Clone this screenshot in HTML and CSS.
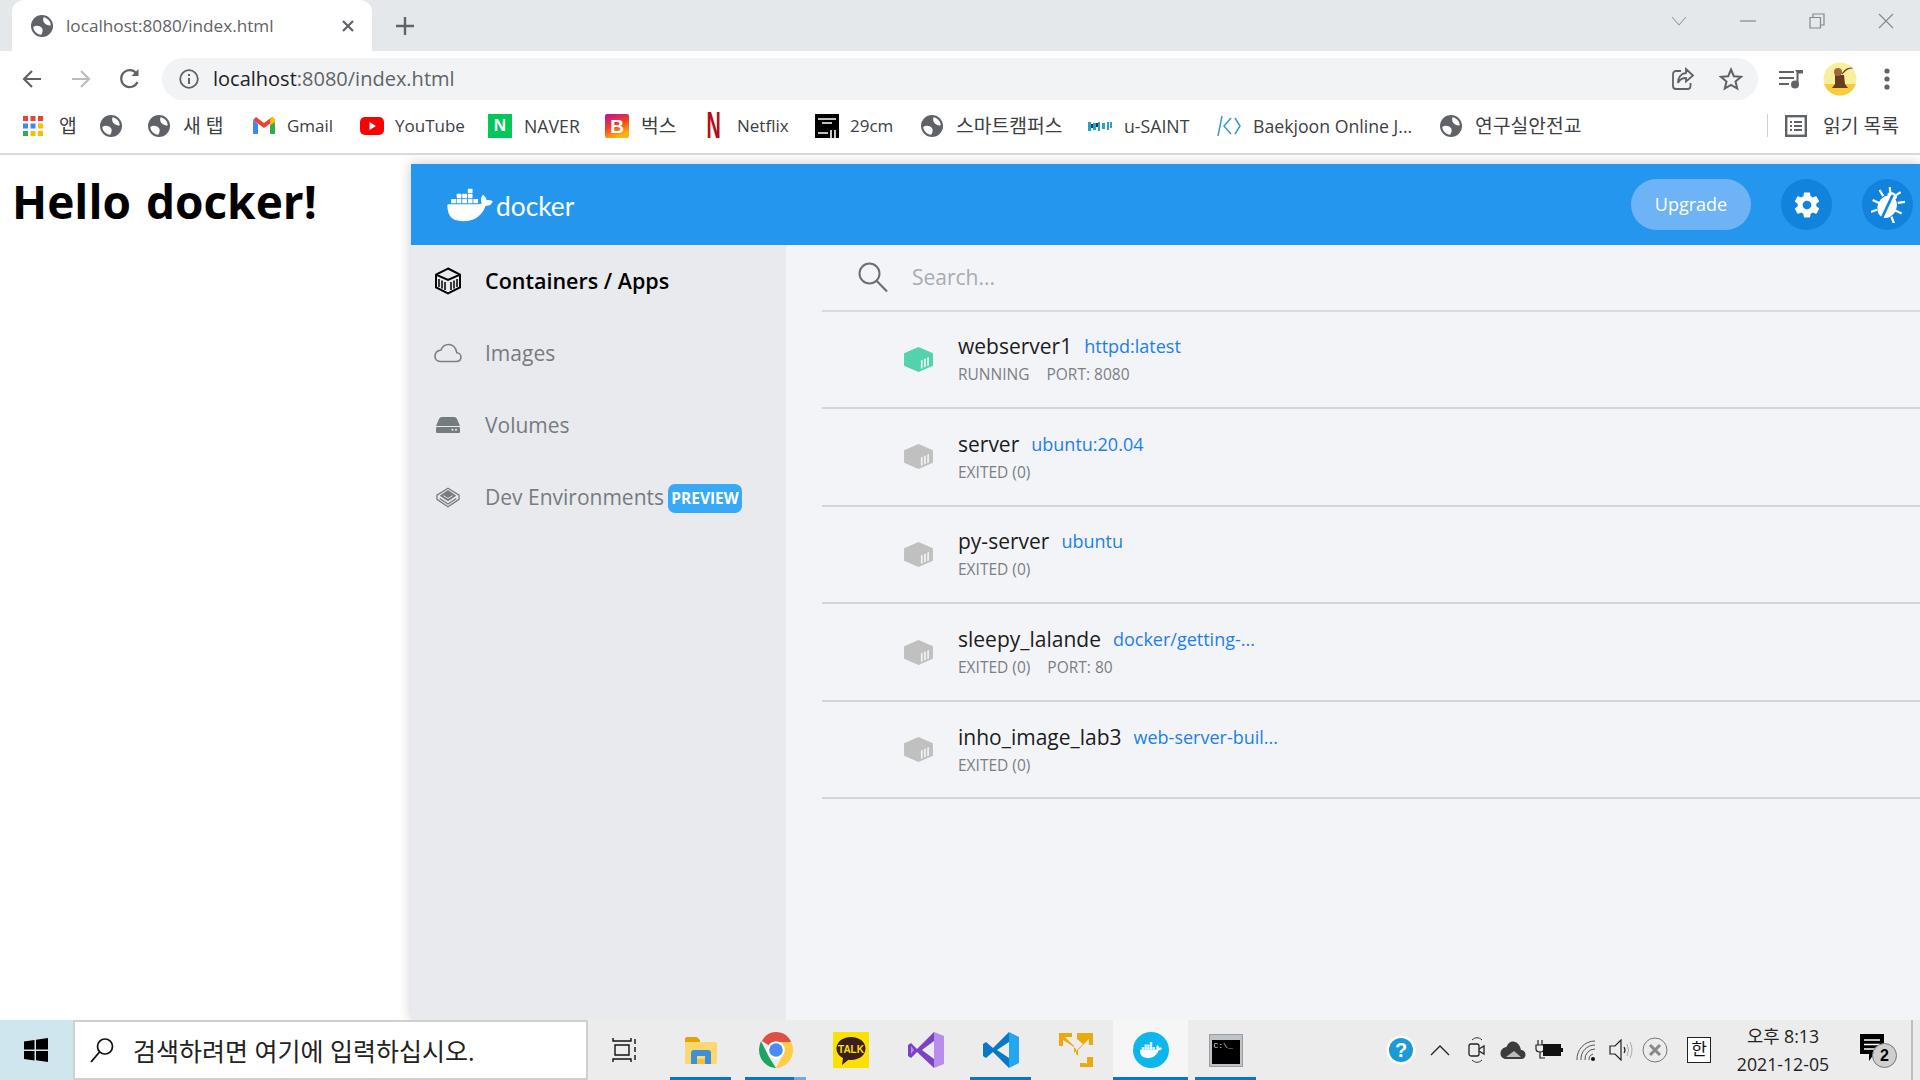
FILE: index.html
```html
<!DOCTYPE html>
<html lang="ko">
<head>
<meta charset="utf-8">
<title>localhost:8080/index.html</title>
<link rel="stylesheet" href="styles.css">
</head>
<body>
<svg class="defs" width="0" height="0">
	<symbol id="globe" viewBox="0 0 24 24">
		<circle cx="12" cy="12" r="11" fill="#5f6368"/>
		<path d="M13.500 3.200C17.500 3.800 20.500 7 20.800 11.200 18.800 11.800 17 11 15.500 10 13.500 8.700 12.500 6 13.500 3.200zM3.200 13C6 10.800 9.500 11.500 11.500 13.500 13.300 15.300 13 18 11.200 20.800 7 20.300 3.800 17.200 3.200 13z" fill="#fff"/>
	</symbol>
	<symbol id="box" viewBox="0 0 32 28">
		<path d="M16 1 31 7.500V20.500L16 27 1 20.500V7.500z"/>
		<path d="M18.500 15 20.200 14.300V23L18.500 23.700zM21.800 13.600 23.500 12.900V21.600L21.800 22.300zM25.100 12.200 26.800 11.500V20.200L25.100 20.900z" fill="#f3f4f7"/>
	</symbol>
	<symbol id="whale" viewBox="0 3 24 18">
		<path d="M13.983 11.078h2.119a.186.186 0 00.186-.185V9.006a.186.186 0 00-.186-.186h-2.119a.185.185 0 00-.185.185v1.888c0 .102.083.185.185.185m-2.954-5.43h2.118a.186.186 0 00.186-.186V3.574a.186.186 0 00-.186-.185h-2.118a.185.185 0 00-.185.185v1.888c0 .102.082.185.185.186m0 2.716h2.118a.187.187 0 00.186-.186V6.29a.186.186 0 00-.186-.185h-2.118a.185.185 0 00-.185.185v1.887c0 .102.082.185.185.186m-2.93 0h2.12a.186.186 0 00.184-.186V6.29a.185.185 0 00-.185-.185H8.100a.185.185 0 00-.185.185v1.887c0 .102.083.185.185.186m-2.964 0h2.119a.186.186 0 00.185-.186V6.29a.185.185 0 00-.185-.185H5.136a.186.186 0 00-.186.185v1.887c0 .102.084.185.186.186m5.893 2.715h2.118a.186.186 0 00.186-.185V9.006a.186.186 0 00-.186-.186h-2.118a.185.185 0 00-.185.185v1.888c0 .102.082.185.185.185m-2.93 0h2.12a.185.185 0 00.184-.185V9.006a.185.185 0 00-.184-.186h-2.12a.185.185 0 00-.184.185v1.888c0 .102.083.185.185.185m-2.964 0h2.119a.185.185 0 00.185-.185V9.006a.185.185 0 00-.184-.186h-2.120a.186.186 0 00-.186.186v1.887c0 .102.084.185.186.185m-2.92 0h2.12a.185.185 0 00.184-.185V9.006a.185.185 0 00-.184-.186h-2.120a.185.185 0 00-.184.185v1.888c0 .102.082.185.185.185M23.763 9.890c-.065-.051-.672-.51-1.954-.51-.338.001-.676.03-1.010.087-.248-1.700-1.653-2.530-1.716-2.566l-.344-.199-.226.327c-.284.438-.49.922-.612 1.430-.23.970-.09 1.882.403 2.661-.595.332-1.550.413-1.744.42H.751a.751.751 0 00-.75.748 11.376 11.376 0 00.692 4.062c.545 1.428 1.355 2.480 2.410 3.124 1.180.723 3.100 1.137 5.275 1.137.983.003 1.963-.086 2.930-.266a12.248 12.248 0 003.823-1.389c.98-.567 1.860-1.288 2.610-2.136 1.252-1.418 1.998-2.997 2.553-4.400h.221c1.372 0 2.215-.549 2.680-1.009.309-.293.55-.65.707-1.046l.098-.288Z"/>
	</symbol>
</svg>

<div class="tabstrip">
	<div class="tab">
		<svg class="tab-fav" width="24" height="24"><use href="#globe"/></svg>
		<span class="tab-title">localhost:8080/index.html</span>
		<svg class="tab-close" width="14" height="14" viewBox="0 0 14 14"><path d="M2 2 12 12M12 2 2 12" stroke="#5f6368" stroke-width="2.200" fill="none"/></svg>
	</div>
	<svg class="tab-new" width="20" height="20" viewBox="0 0 20 20"><path d="M10 1V19M1 10H19" stroke="#5f6368" stroke-width="2.400" fill="none"/></svg>
	<div class="winctl">
		<svg width="18" height="12" viewBox="0 0 18 12"><path d="M2 2 9 10 16 2" stroke="#9a9da1" stroke-width="1.100" fill="none"/></svg>
		<svg width="16" height="4" viewBox="0 0 16 4"><path d="M0 2H16" stroke="#85888c" stroke-width="1.200"/></svg>
		<svg width="16" height="16" viewBox="0 0 16 16"><path d="M4 4V1H15V12H12M1 4.500H11.500V15H1z" stroke="#85888c" stroke-width="1.200" fill="none"/></svg>
		<svg width="16" height="16" viewBox="0 0 16 16"><path d="M1 1 15 15M15 1 1 15" stroke="#85888c" stroke-width="1.100" fill="none"/></svg>
	</div>
</div>

<div class="toolbar">
	<svg class="nav-btn" width="22" height="22" viewBox="0 0 22 22"><path d="M20 11H3M11 3 3 11 11 19" stroke="#5f6368" stroke-width="2.200" fill="none"/></svg>
	<svg class="nav-btn" width="22" height="22" viewBox="0 0 22 22"><path d="M2 11H19M11 3 19 11 11 19" stroke="#b9bcc0" stroke-width="2.200" fill="none"/></svg>
	<svg class="nav-btn" width="24" height="24" viewBox="0 0 24 24"><path d="M19.500 15a8.500 8.500 0 1 1-1-8.500" stroke="#5f6368" stroke-width="2.200" fill="none"/><path d="M20.500 2V9H13.500z" fill="#5f6368"/></svg>
	<div class="omnibox">
		<svg class="omni-info" width="20" height="20" viewBox="0 0 20 20"><circle cx="10" cy="10" r="8.800" stroke="#5f6368" stroke-width="1.800" fill="none"/><path d="M10 9V15M10 5V7" stroke="#5f6368" stroke-width="2" fill="none"/></svg>
		<span class="omni-url"><b>localhost</b>:8080/index.html</span>
		<svg class="omni-share" width="24" height="24" viewBox="0 0 24 24"><path d="M10 4H5a3 3 0 0 0-3 3V19a3 3 0 0 0 3 3H17a3 3 0 0 0 2.500-3V16" stroke="#5f6368" stroke-width="1.800" fill="none"/><path d="M15 2 22 8.500 15 14.500V11C11 11 8.500 12.500 7 16 7 10.500 10 6.500 15 6z" stroke="#5f6368" stroke-width="1.800" fill="none"/></svg>
		<svg width="24" height="24" viewBox="0 0 24 24"><path d="M12 2.500 14.800 9.200 22 9.800 16.500 14.500 18.200 21.500 12 17.800 5.800 21.500 7.500 14.500 2 9.800 9.200 9.200z" stroke="#5f6368" stroke-width="2" fill="none"/></svg>
	</div>
	<svg class="tool-media" width="24" height="20" viewBox="0 0 24 20"><path d="M0 3H15M0 9H15M0 15H10" stroke="#5f6368" stroke-width="2"/><path d="M16 1H24V4.500H19.500V15.500H17.500V3z" fill="#5f6368"/><circle cx="16" cy="15.500" r="4" fill="#5f6368"/></svg>
	<svg class="tool-avatar" width="34" height="34" viewBox="0 0 34 34"><defs><clipPath id="avc"><circle cx="17" cy="17" r="16.500"/></clipPath></defs><g clip-path="url(#avc)"><rect width="34" height="34" fill="#f7ef9c"/><rect y="22" width="34" height="12" fill="#f6cc3c"/><path d="M12 13H21L22 22 25 26H9L12 22z" fill="#6a3c1f"/><circle cx="15" cy="10" r="4" fill="#9c6a40"/><path d="M19 12C23 7 25 6 30 6" stroke="#6a3c1f" stroke-width="1.200" fill="none"/></g></svg>
	<svg class="tool-dots" width="6" height="22" viewBox="0 0 6 22"><circle cx="3" cy="3" r="2.600" fill="#5f6368"/><circle cx="3" cy="11" r="2.600" fill="#5f6368"/><circle cx="3" cy="19" r="2.600" fill="#5f6368"/></svg>
</div>

<div class="bookmarks">
	<div class="bm bm-apps"><svg width="20" height="20" viewBox="0 0 20 20"><rect width="5" height="5" fill="#ea4335"/><rect x="7.500" width="5" height="5" fill="#ea4335"/><rect x="15" width="5" height="5" fill="#ea4335"/><rect y="7.500" width="5" height="5" fill="#4285f4"/><rect x="7.500" y="7.500" width="5" height="5" fill="#4285f4"/><rect x="15" y="7.500" width="5" height="5" fill="#fbbc05"/><rect y="15" width="5" height="5" fill="#34a853"/><rect x="7.500" y="15" width="5" height="5" fill="#fbbc05"/><rect x="15" y="15" width="5" height="5" fill="#fbbc05"/></svg><span class="ko">앱</span></div>
	<div class="bm"><svg class="bm-ico" width="24" height="24"><use href="#globe"/></svg></div>
	<div class="bm"><svg class="bm-ico" width="24" height="24"><use href="#globe"/></svg><span class="ko">새 탭</span></div>
	<div class="bm bm-tight"><svg class="bm-ico" width="24" height="24" viewBox="0 0 24 24"><path d="M1 6V20H6V10z" fill="#4285f4"/><path d="M23 6V20H18V10z" fill="#34a853"/><path d="M1 6 12 14 23 6 20 3 12 9 4 3z" fill="#ea4335"/><path d="M18 5 20 3 23 5V8L18 11.500z" fill="#fbbc05"/></svg><span>Gmail</span></div>
	<div class="bm bm-tight"><svg class="bm-ico" width="24" height="24" viewBox="0 0 24 24"><rect y="3" width="24" height="18" rx="5" fill="#f00"/><path d="M9.500 8 16 12 9.500 16z" fill="#fff"/></svg><span>YouTube</span></div>
	<div class="bm"><div class="bm-naver">N</div><span class="bm-wide">NAVER</span></div>
	<div class="bm"><svg class="bm-ico" width="24" height="24" viewBox="0 0 24 24"><defs><linearGradient id="vibe" x1="0" y1="0" x2=".4" y2="1"><stop offset="0" stop-color="#b80fa8"/><stop offset=".55" stop-color="#f0431e"/><stop offset="1" stop-color="#fbb40f"/></linearGradient></defs><rect width="24" height="24" rx="2" fill="url(#vibe)"/><text x="12" y="19" class="vibe-b">B</text></svg><span class="ko">벅스</span></div>
	<div class="bm"><div class="bm-netflix"><span>N</span></div><span>Netflix</span></div>
	<div class="bm bm-tight"><svg class="bm-ico" width="24" height="24" viewBox="0 0 24 24"><rect width="24" height="24" fill="#000"/><path d="M3 5H21M7 9H17M3 19H13M16 16V24M20 16V24" stroke="#fff" stroke-width="1.600"/></svg><span>29cm</span></div>
	<div class="bm"><svg class="bm-ico" width="24" height="24"><use href="#globe"/></svg><span class="ko">스마트캠퍼스</span></div>
	<div class="bm"><svg class="bm-ico" width="24" height="24" viewBox="0 0 24 24"><path d="M0 8H3V17H0zM5 9H8V16H5zM10 8H12V17H10zM14 9H17V15H14zM19 8H21V16H19zM22 8H24V14H22z" fill="#2b9fc4"/><path d="M3 10H5V14H3zM8 9H10V13H8z" fill="#143a66"/></svg><span class="bm-wide">u-SAINT</span></div>
	<div class="bm"><svg class="bm-ico" width="24" height="24" viewBox="0 0 24 24"><path d="M5 2 1 22M14 4 7 12 14 20M18 4 23 12 18 20" stroke="#3b97d3" stroke-width="1.500" fill="none"/></svg><span class="bm-wide">Baekjoon Online J...</span></div>
	<div class="bm"><svg class="bm-ico" width="24" height="24"><use href="#globe"/></svg><span class="ko">연구실안전교</span></div>
	<div class="bm-sep"></div>
	<div class="bm bm-read"><svg class="bm-ico" width="22" height="22" viewBox="0 0 22 22"><rect x="1.200" y="1.200" width="19.600" height="19.600" stroke="#5f6368" stroke-width="2.400" fill="none"/><path d="M5 7H7M9 7H17M5 11H7M9 11H17M5 15H7M9 15H17" stroke="#5f6368" stroke-width="2"/></svg><span class="ko">읽기 목록</span></div>
</div>

<div class="page">
	<div class="page-left">
		<h1>Hello docker!</h1>
	</div>
	<div class="dd">
		<div class="dd-head">
			<div class="dd-logo">
				<svg width="46" height="34" class="dd-whale"><use href="#whale"/></svg>
				<span>docker</span>
			</div>
			<div class="dd-upgrade">Upgrade</div>
			<div class="dd-round">
				<svg width="30" height="30" viewBox="0 0 24 24"><path fill="#fff" d="M19.400 13c.04-.33.06-.66.06-1s-.02-.67-.06-1l2.100-1.650a.5.5 0 0 0 .12-.64l-2-3.460a.5.5 0 0 0-.61-.22l-2.490 1a7.300 7.300 0 0 0-1.690-.98l-.38-2.650A.49.49 0 0 0 14 2h-4a.49.49 0 0 0-.49.42l-.38 2.650c-.61.25-1.170.59-1.690.98l-2.490-1a.5.5 0 0 0-.61.22l-2 3.460a.49.49 0 0 0 .12.64L4.570 11c-.04.33-.07.67-.07 1s.03.67.07 1l-2.110 1.650a.5.5 0 0 0-.12.64l2 3.460c.12.22.39.3.61.22l2.490-1c.52.4 1.080.73 1.690.98l.38 2.650c.03.24.24.42.49.42h4c.25 0 .46-.18.49-.42l.38-2.650c.61-.25 1.170-.59 1.690-.98l2.490 1c.23.09.49 0 .61-.22l2-3.460a.5.5 0 0 0-.12-.64zM12 15.500a3.500 3.500 0 1 1 0-7 3.500 3.500 0 0 1 0 7z"/></svg>
			</div>
			<div class="dd-round">
				<svg width="34" height="36" viewBox="0 0 34 36"><g transform="rotate(25 17 18)"><ellipse cx="17" cy="20" rx="9.500" ry="11.500" fill="#fff"/><ellipse cx="17" cy="8" rx="5" ry="3.500" fill="#fff"/><path d="M14 6 11 1M20 6 23 1M9 12 3 8M8 20H1M9 27 4 32M25 12 31 8M26 20H33M25 27 30 32" stroke="#fff" stroke-width="2.200" fill="none"/><path d="M17 7V33" stroke="#1283dd" stroke-width="2.600"/></g></svg>
			</div>
		</div>
		<div class="dd-body">
			<div class="dd-side">
				<div class="side-item side-on">
					<i class="side-ico"><svg width="28" height="28" viewBox="0 0 28 28"><path d="M14 1.500 26 7.500V20.500L14 26.500 2 20.500V7.500z" stroke="#000" stroke-width="2" fill="none"/><path d="M2.500 7.800 14 13 25.500 7.800" stroke="#000" stroke-width="2" fill="none"/><path d="M5 12V20M8 13.500V21.500M11 15V23M17 15V23M20 13.500V21.500M23 12V20" stroke="#000" stroke-width="1.500"/></svg></i>
					<span>Containers / Apps</span>
				</div>
				<div class="side-item">
					<i class="side-ico"><svg width="28" height="20" viewBox="0 0 28 20"><path d="M7 18.500H22C25 18.500 27 16.800 27 14 27 11.500 25 9.800 22.800 9.700 22 4.500 18.500 1.500 14.500 1.500 11 1.500 8.300 3.500 7 7 3.500 7.500 1 10 1 13.500 1 16.500 3.500 18.500 7 18.500z" stroke="#7b7f84" stroke-width="1.600" fill="none"/></svg></i>
					<span>Images</span>
				</div>
				<div class="side-item">
					<i class="side-ico"><svg width="24" height="16" viewBox="0 0 24 16"><path d="M0 9 3 2C3.500 .8 4.500 0 6 0H18C19.500 0 20.500 .8 21 2L24 9z" fill="#767b80"/><path d="M1.500 10H22.500C23.500 10 24 10.500 24 11.500V14.500C24 15.500 23.500 16 22.500 16H1.500C.5 16 0 15.500 0 14.500V11.500C0 10.500 .5 10 1.500 10z" fill="#767b80"/><circle cx="16.500" cy="12.800" r="1" fill="#e9eaee"/><circle cx="20" cy="12.800" r="1" fill="#e9eaee"/></svg></i>
					<span>Volumes</span>
				</div>
				<div class="side-item">
					<i class="side-ico"><svg width="24" height="21" viewBox="0 0 26 22"><path d="M13 1 25 8.500V13L13 21 1 13V8.500z" stroke="#767b80" stroke-width="1.400" fill="none"/><path d="M13 3 22 9 13 15 4 9z" fill="#767b80"/><path d="M4 12 13 18 22 12" stroke="#767b80" stroke-width="1.400" fill="none"/><path d="M8 9 13 12 18 9" stroke="#e9eaee" stroke-width="1" fill="none"/></svg></i>
					<span>Dev Environments</span>
					<em class="side-badge">PREVIEW</em>
				</div>
			</div>
			<div class="dd-main">
				<div class="dd-search">
					<svg width="30" height="30" viewBox="0 0 30 30"><circle cx="11.500" cy="11.500" r="10" stroke="#6b7075" stroke-width="2" fill="none"/><path d="M18.500 18.800 29 29.500" stroke="#6b7075" stroke-width="2.200"/></svg>
					<span>Search...</span>
				</div>
				<div class="row">
					<svg class="row-ico row-ico-on" width="31" height="27"><use href="#box"/></svg>
					<div class="row-text">
						<div class="row-top"><span class="row-name">webserver1</span><span class="row-image">httpd:latest</span></div>
						<div class="row-sub"><span>RUNNING</span><span>PORT: 8080</span></div>
					</div>
				</div>
				<div class="row">
					<svg class="row-ico" width="31" height="27"><use href="#box"/></svg>
					<div class="row-text">
						<div class="row-top"><span class="row-name">server</span><span class="row-image">ubuntu:20.04</span></div>
						<div class="row-sub"><span>EXITED (0)</span></div>
					</div>
				</div>
				<div class="row">
					<svg class="row-ico" width="31" height="27"><use href="#box"/></svg>
					<div class="row-text">
						<div class="row-top"><span class="row-name">py-server</span><span class="row-image">ubuntu</span></div>
						<div class="row-sub"><span>EXITED (0)</span></div>
					</div>
				</div>
				<div class="row">
					<svg class="row-ico" width="31" height="27"><use href="#box"/></svg>
					<div class="row-text">
						<div class="row-top"><span class="row-name">sleepy_lalande</span><span class="row-image">docker/getting-...</span></div>
						<div class="row-sub"><span>EXITED (0)</span><span>PORT: 80</span></div>
					</div>
				</div>
				<div class="row">
					<svg class="row-ico" width="31" height="27"><use href="#box"/></svg>
					<div class="row-text">
						<div class="row-top"><span class="row-name">inho_image_lab3</span><span class="row-image">web-server-buil...</span></div>
						<div class="row-sub"><span>EXITED (0)</span></div>
					</div>
				</div>
			</div>
		</div>
	</div>
</div>

<div class="taskbar">
	<div class="start">
		<svg width="24" height="24" viewBox="0 0 24 24"><path d="M0 3.500 10.500 2V11.500H0zM12 1.800 24 0V11.500H12zM0 13H10.500V22.500L0 21zM12 13H24V24L12 22.200z" fill="#000"/></svg>
	</div>
	<div class="tb-search">
		<svg width="24" height="26" viewBox="0 0 24 26"><circle cx="15" cy="9.500" r="7.500" stroke="#111" stroke-width="1.700" fill="none"/><path d="M9.500 15 1 25" stroke="#111" stroke-width="1.900"/></svg>
		<span>검색하려면 여기에 입력하십시오.</span>
	</div>
	<svg class="tb-view" width="26" height="26" viewBox="0 0 26 26"><path d="M2 1V4H20V1M4 8H18V18H4zM2 25V22H20V25M24 2V7M24 10V15M24 18V23" stroke="#111" stroke-width="1.400" fill="none"/></svg>
	<div class="tb-apps">
		<div class="app app-open">
			<svg width="34" height="30" viewBox="0 0 34 30"><path d="M1 4A2 2 0 0 1 3 2H13L16 5V9H1z" fill="#e2a30d"/><path d="M1 7H31A2 2 0 0 1 33 9V27A2 2 0 0 1 31 29H3A2 2 0 0 1 1 27z" fill="#fcd66e"/><path d="M7 29V18A3 3 0 0 1 10 15H24A3 3 0 0 1 27 18V29H21V21H13V29z" fill="#3f8fd6"/><rect x="13" y="24" width="8" height="5" fill="#f6bd3f"/></svg>
		</div>
		<div class="app app-open app-multi">
			<svg width="34" height="36" viewBox="0 0 34 36"><path d="M17 18 3 9C6 3 11 0 17 0 24 0 30 4 32 10H17z" fill="#dd5144"/><path d="M2 9 10 25 17 36C8 36 0 28 0 18 0 15 1 12 2 9z" fill="#1da462"/><path d="M17 36 25 21 17 10H32C33.500 13 34 15 34 18 34 28 26 36 17 36z" fill="#ffcd46"/><circle cx="17" cy="18" r="8.800" fill="#fff"/><circle cx="17" cy="18" r="6.800" fill="#4c8bf5"/></svg>
		</div>
		<div class="app">
			<svg width="36" height="36" viewBox="0 0 36 36"><rect width="36" height="36" rx="1" fill="#fae100"/><path d="M18 5C9.500 5 3.500 10 3.500 16.500 3.500 20.800 6 24 10 26L9 33 15.500 27.800C16.300 27.900 17.200 28 18 28 26.500 28 32.500 23 32.500 16.500S26.500 5 18 5z" fill="#3b1e1e"/><text x="18" y="21" class="talk">TALK</text></svg>
		</div>
		<div class="app">
			<svg width="36" height="36" viewBox="0 0 36 36"><path d="M26 0 36 4V32L26 36V0z" fill="#b88ded"/><path d="M26 0 9 17 3 11 0 13V24L3 26 9 20 26 36 26 27 14 18 26 9z" fill="#7c42c4"/><path d="M3 14 6 18 3 22z" fill="#b88ded"/></svg>
		</div>
		<div class="app app-open">
			<svg width="36" height="36" viewBox="0 0 36 36"><path d="M26 0 36 5V31L26 36V0z" fill="#24a6ee"/><path d="M26 0 10 16 3 10 0 12V24L3 26 10 20 26 36V26L14 18 26 10z" fill="#0a79c4"/></svg>
		</div>
		<div class="app">
			<svg width="36" height="36" viewBox="0 0 36 36"><path d="M1 1H14V5H7L12 10 16 14V21L21 16 25 12 19 7V1H35V13H31V7L25 13 20 18V23L24 27 29 32V25H35V35H22V31H28L22 25 18 22V17L13 13 5 8V14H1z" fill="#eaa90c"/></svg>
		</div>
		<div class="app app-open app-active">
			<svg width="36" height="36" viewBox="0 0 36 36"><circle cx="18" cy="18" r="18" fill="#0db7ed"/><svg x="7" y="8" width="22" height="20" fill="#fff"><use href="#whale"/></svg></svg>
		</div>
		<div class="app app-open">
			<div class="cmd"><div class="cmd-bar"></div><div class="cmd-screen">C:\_</div></div>
		</div>
	</div>
	<div class="tray">
		<svg width="30" height="30" viewBox="0 0 30 30"><circle cx="15" cy="15" r="14.500" fill="#fff"/><circle cx="15" cy="15" r="12" fill="#1b9ad6"/><text x="15" y="22" class="help">?</text></svg>
		<svg width="20" height="12" viewBox="0 0 20 12"><path d="M1 11 10 2 19 11" stroke="#222" stroke-width="1.300" fill="none"/></svg>
		<svg width="18" height="26" viewBox="0 0 18 26"><path d="M4 3C7 0 11 0 14 3M4 23C7 26 11 26 14 23" stroke="#333" stroke-width="1" fill="none"/><rect x="1" y="7" width="10" height="12" rx="2" stroke="#222" stroke-width="1.300" fill="none"/><path d="M11 12 16 9V17L11 14" stroke="#222" stroke-width="1.300" fill="none"/></svg>
		<svg width="26" height="20" viewBox="0 0 26 20"><path d="M6 19H21C24 19 25.500 17 25.500 14.500 25.500 12 23.500 10 21 10 20 5 17 1.500 13 1.500 9.500 1.500 7.500 4 6.500 7 3 7.500.5 10 .5 13.500.5 16.500 3 19 6 19z" fill="#3c3c3c"/><path d="M6 17 14 11 21 17z" fill="#bcbcbc"/></svg>
		<svg width="28" height="20" viewBox="0 0 28 20"><path d="M3 0V5M7 0V5M1 5H9V9C9 11 7 12 5 12S1 11 1 9zM5 12V18H10" stroke="#222" stroke-width="1.200" fill="none"/><rect x="8" y="4" width="18" height="12" fill="#111"/><rect x="26" y="8" width="2" height="4" fill="#111"/></svg>
		<svg width="20" height="22" viewBox="0 0 20 22"><path d="M1 21A18 18 0 0 1 19 2M5 21A14 14 0 0 1 19 6M9 21A10 10 0 0 1 19 10M13 21A6 6 0 0 1 17 15" stroke="#555" stroke-width="1" fill="none"/><circle cx="17" cy="20" r="2" fill="#111"/></svg>
		<svg width="24" height="22" viewBox="0 0 24 22"><path d="M1 7H6L12 1V21L6 15H1z" stroke="#222" stroke-width="1.200" fill="none"/><path d="M15 8Q17 11 15 14" stroke="#222" stroke-width="1.200" fill="none"/><path d="M18 5Q21 11 18 17M21 3Q25 11 21 19" stroke="#aaa" stroke-width="1" fill="none"/></svg>
		<svg width="26" height="26" viewBox="0 0 26 26"><circle cx="13" cy="13" r="12" stroke="#777" stroke-width="1" fill="none"/><path d="M8 8 18 18M18 8 8 18" stroke="#888" stroke-width="3" fill="none"/></svg>
		<div class="tray-ime">한</div>
		<div class="clock"><span>오후 8:13</span><span>2021-12-05</span></div>
		<div class="notify">
			<svg width="26" height="28" viewBox="0 0 26 28"><path d="M1 0H25V20H15L10 27V20H1z" fill="#000"/><path d="M5 6H21M5 10.500H21M5 15H16" stroke="#fff" stroke-width="1.600"/></svg>
			<span class="notify-num">2</span>
		</div>
	</div>
	<div class="tb-end"></div>
</div>
</body>
</html>
```

FILE: styles.css
```css
*{margin:0;padding:0;box-sizing:border-box;}
html,body{width:1920px;height:1080px;overflow:hidden;}
body{display:flex;flex-direction:column;background:#fff;font-family:"Open Sans","Noto Sans CJK KR",sans-serif;color:#3c4043;}
svg{display:block;flex:none;}
.defs{position:absolute;}

/* chrome */
.tabstrip{height:51px;flex:none;display:flex;align-items:flex-start;background:#e5e8eb;padding-left:12px;}
.tab{width:360px;height:51px;background:#fff;border-radius:12px 12px 0 0;display:flex;align-items:center;padding:0 17px 0 18px;}
.tab-fav{margin-right:12px;}
.tab-title{flex:1;font-size:17.200px;color:#5f6368;white-space:nowrap;}
.tab-new{margin:16px 0 0 23px;}
.winctl{margin-left:auto;margin-right:1px;width:275px;height:42px;display:grid;grid-template-columns:repeat(4,69px);align-items:center;justify-items:center;}
.toolbar{height:49px;flex:none;display:flex;align-items:center;padding:6px 0 0 21px;}
.nav-btn{margin-right:26.500px;}
.omnibox{width:1596px;height:42px;margin-left:-6.500px;background:#f1f3f4;border-radius:21px;display:flex;align-items:center;padding:0 15px 0 17px;}
.omni-info{margin-right:14px;}
.omni-url{flex:1;font-size:20px;color:#5f6368;white-space:nowrap;}
.omni-url b{font-weight:400;color:#1f2124;}
.omni-share{margin-right:24px;}
.tool-media{margin-left:21px;}
.tool-avatar{margin-left:20px;}
.tool-dots{margin-left:27px;}
.bookmarks{height:55px;flex:none;display:grid;grid-template-columns:76px 48px 105px 108px 128px 117px 96px 114px 105px 168px 129px 222px 328px 18px auto;align-items:center;padding:0 0 2px 23px;border-bottom:2px solid #dadada;font-size:17px;color:#3c4043;white-space:nowrap;}
.bm{display:flex;align-items:center;gap:12px;}
.bm-tight{gap:11px;}
.bm-apps{gap:16px;}
.bm .ko{font-size:19.300px;line-height:26px;}
.bm-wide{font-size:17.700px;}
.bm-naver{width:24px;height:24px;background:#03c75a;color:#fff;font:700 17px/24px "Liberation Sans",sans-serif;text-align:center;}
.bm-netflix{width:24px;height:26px;color:#b80d16;font:700 36px/26px "Liberation Sans",sans-serif;text-align:center;}
.bm-netflix span{display:block;transform:scaleX(.55);}
.vibe-b{font:700 19px "Liberation Sans",sans-serif;fill:#fff;text-anchor:middle;}
.bm-sep{width:1px;height:23px;background:#cfd0d2;}
.bm-read{gap:16px;}

/* page */
.page{flex:1;display:flex;min-height:0;}
.page-left{width:411px;flex:none;padding:14px 0 0 12px;}
.page-left h1{font-size:46px;line-height:64px;font-weight:700;word-spacing:3px;color:#000;white-space:nowrap;}
.dd{flex:1;margin-top:9px;display:flex;flex-direction:column;box-shadow:0 0 12px rgba(0,0,0,.22);background:#f3f4f7;}

/* docker window */
.dd-head{height:81px;flex:none;background:#2496ed;display:flex;align-items:center;padding:0 7px 0 36px;}
.dd-logo{display:flex;align-items:center;gap:3px;margin-right:auto;color:#fff;}
.dd-logo span{font:400 26.300px/34px Lato,sans-serif;margin-top:3px;}
.dd-whale{fill:#fff;}
.dd-upgrade{width:120px;height:51px;border-radius:26px;background:#6eb3f5;color:#fff;font-size:18px;line-height:50px;text-align:center;}
.dd-round{width:51px;height:51px;border-radius:50%;background:#1283dd;margin-left:30px;display:flex;align-items:center;justify-content:center;}
.dd-body{flex:1;display:flex;min-height:0;}
.dd-side{width:375px;flex:none;background:#e9eaee;}
.side-item{height:72px;display:flex;align-items:center;padding-left:23px;font-size:21px;color:#767b80;}
.side-ico{width:28px;margin-right:23px;flex:none;display:flex;justify-content:center;}
.side-on{font-size:21.500px;font-weight:600;color:#000;padding-bottom:1px;}
.side-badge{margin:2px 0 0 4px;width:74px;height:29px;border-radius:7px;background:#37a9f7;color:#fff;font-size:15.500px;font-style:normal;font-weight:700;line-height:29px;text-align:center;}
.dd-main{flex:1;padding-left:36px;}
.dd-search{height:66.500px;display:flex;align-items:center;gap:24px;padding-left:36px;border-bottom:2px solid #d9dadd;font-size:21px;color:#a8abaf;}
.row{height:97.600px;display:flex;align-items:center;gap:24px;padding:0 0 0 81px;border-bottom:2px solid #d4d5d8;}
.row-ico{fill:#c0c0c0;}
.row-ico-on{fill:#52d3ae;}
.row-text{margin-top:-2px;}
.row-top{display:flex;align-items:center;gap:12px;line-height:28px;white-space:nowrap;}
.row-name{font-size:21px;color:#1c1c1c;}
.row-image{font-size:18px;color:#1d7fe8;}
.row-sub{display:flex;gap:17px;margin-top:4px;font-size:15.500px;line-height:20px;color:#7b7f84;}

/* taskbar */
.taskbar{height:60px;flex:none;display:flex;align-items:center;background:#ececec;}
.start{width:73px;height:60px;padding-right:1px;background:#cfe6ef;display:flex;align-items:center;justify-content:center;}
.tb-search{width:515px;height:60px;background:#fff;border:2px solid #cfcfcf;display:flex;align-items:center;gap:19px;padding-left:15px;font-size:25px;color:#222;white-space:nowrap;}
.tb-view{margin-left:23px;}
.tb-apps{display:flex;margin-left:26px;}
.app{width:75px;height:60px;display:flex;align-items:center;justify-content:center;position:relative;}
.app-open::after{content:"";position:absolute;left:7px;right:7px;bottom:0;height:3px;background:#0078d7;}
.app-multi::before{content:"";position:absolute;right:7px;bottom:0;width:12px;height:3px;background:#6aaee6;z-index:1;}
.app-active{background:#f6f6f6;}
.app-active::after{left:0;right:0;}
.talk{font:700 10px "Liberation Sans",sans-serif;fill:#fae100;text-anchor:middle;}
.cmd{width:34px;height:33px;background:#bfc3c8;border:1px solid #9a9da1;padding:0 2px 2px;display:flex;flex-direction:column;}
.cmd-bar{height:5px;flex:none;}
.cmd-screen{flex:1;background:#000;color:#ddd;font:400 8px/12px "Liberation Mono",monospace;padding-left:2px;}
.tray{margin-left:auto;height:60px;display:grid;grid-template-columns:41px 38px 36px 36px 36px 37px 33px 36px 52px 116px 58px;align-items:center;justify-items:center;margin-right:12px;}
.help{font:700 20px "Liberation Sans",sans-serif;fill:#fff;text-anchor:middle;}
.tray-ime{width:24px;height:26px;background:#fff;border:1px solid #222;font-size:17px;line-height:22px;text-align:center;color:#111;}
.clock{display:flex;flex-direction:column;align-items:center;font-size:17.700px;line-height:28px;color:#222;white-space:nowrap;}
.notify{position:relative;width:40px;height:40px;padding:4px 0 0 6px;margin-left:6px;}
.notify-num{position:absolute;left:19px;top:13px;width:25px;height:25px;border-radius:50%;background:#cfcfcf;border:1px solid #777;font:700 16px/23px "Liberation Sans",sans-serif;text-align:center;color:#000;}
.tb-end{width:2px;height:60px;background:#bfbfbf;margin-right:7px;}
```
